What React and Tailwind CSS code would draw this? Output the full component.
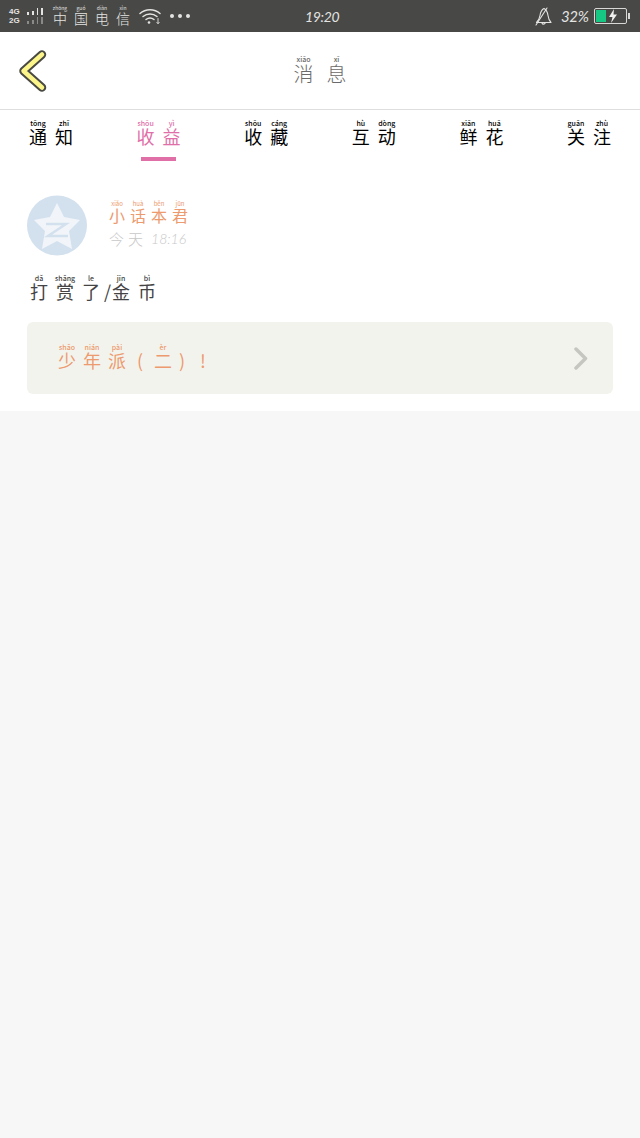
import React from 'react';

const cjk = { fontFamily: '"Noto Sans CJK SC", "Noto Sans", sans-serif' };

// One character with its pinyin on top
function Py({ han, pin, box = 'w-[18px]', pinClass = 'text-[7px] leading-[8px] font-medium', hanClass = 'text-[18px] leading-[19px]' }) {
  return (
    <span className={`inline-flex flex-col items-center shrink-0 ${box}`}>
      <span className={`${pinClass} whitespace-nowrap`}>{pin}</span>
      <span className={hanClass}>{han}</span>
    </span>
  );
}

const tabs = [
  { name: [['通', 'tōng'], ['知', 'zhī']] },
  { name: [['收', 'shōu'], ['益', 'yì']], active: true },
  { name: [['收', 'shōu'], ['藏', 'cáng']] },
  { name: [['互', 'hù'], ['动', 'dòng']] },
  { name: [['鲜', 'xiān'], ['花', 'huā']] },
  { name: [['关', 'guān'], ['注', 'zhù']] },
];

function StatusBar() {
  return (
    <div className="h-8 bg-[#484846] flex items-center pl-[9px] text-[#e4e4e2]">
      <div className="w-[18px] shrink-0 text-[8px] leading-[9px] font-semibold" style={{ fontFamily: '"Liberation Sans", sans-serif' }}>
        <div>4G</div>
        <div>2G</div>
      </div>
      <div className="w-[16px] shrink-0 flex flex-col gap-[2px]">
        <div className="flex items-end gap-[3px] h-[7px]">
          <span className="w-[2px] h-[3px] bg-[#e4e4e2]" />
          <span className="w-[2px] h-[4px] bg-[#e4e4e2]" />
          <span className="w-[2px] h-[7px] bg-[#e4e4e2]" />
          <span className="w-[2px] h-[7px] bg-[#e4e4e2]" />
        </div>
        <div className="flex items-end gap-[3px] h-[7px]">
          <span className="w-[2px] h-[3px] bg-[#8a8a88]" />
          <span className="w-[2px] h-[4px] bg-[#8a8a88]" />
          <span className="w-[2px] h-[7px] bg-[#8a8a88]" />
          <span className="w-[2px] h-[7px] bg-[#8a8a88]" />
        </div>
      </div>
      <div className="ml-[10px] flex gap-[7px] shrink-0" style={cjk}>
        {[['中', 'zhōng'], ['国', 'guó'], ['电', 'diàn'], ['信', 'xìn']].map(([han, pin]) => (
          <Py key={han} han={han} pin={pin} box="w-[14px]" pinClass="text-[5px] leading-[5px]" hanClass="text-[14px] leading-[17px] font-light" />
        ))}
      </div>
      <svg className="ml-[9px] shrink-0" width="22" height="18" viewBox="0 0 22 18" fill="none" stroke="#e4e4e2" strokeWidth="1.500" strokeLinecap="round">
        <path d="M1 6.500C6.500 1.500 15.500 1.500 21 6.500" />
        <path d="M4 9.500C8 6 14 6 18 9.500" />
        <path d="M7 12.500C9.500 10.500 12.500 10.500 15 12.500" />
        <circle cx="10" cy="15.500" r="1.300" fill="#e4e4e2" stroke="none" />
        <path d="M19 11.500v5M17.800 15.400l1.200 1.200 1.200-1.200" strokeWidth="0.900" />
      </svg>
      <div className="ml-[9px] flex gap-[4px] shrink-0">
        <span className="w-[4px] h-[4px] rounded-full bg-[#e4e4e2]" />
        <span className="w-[4px] h-[4px] rounded-full bg-[#e4e4e2]" />
        <span className="w-[4px] h-[4px] rounded-full bg-[#e4e4e2]" />
      </div>
      <span className="ml-[115px] w-[32px] shrink-0 text-[14px] tracking-tight italic" style={{ fontFamily: 'Lato, sans-serif' }}>19:20</span>
      <svg className="ml-[198px] shrink-0" width="18" height="20" viewBox="0 0 18 20" fill="none" stroke="#e4e4e2" strokeWidth="1.100" strokeLinecap="round" strokeLinejoin="round">
        <path d="M1.500 16.500c2-2 3-4 3.500-7 .5-3.500 2-6 4-7 2 1 3.500 3.500 4 7 .4 3 1 5 3 7z" />
        <path d="M7 17c.4 1.500 2.600 1.500 3.200 0" />
        <path d="M1 19L12 2" />
      </svg>
      <span className="ml-[8px] w-[24px] shrink-0 text-[15px] tracking-tight italic whitespace-nowrap" style={{ fontFamily: 'Lato, sans-serif' }}>32%</span>
      <div className="ml-[9px] flex items-center shrink-0">
        <div className="w-[33px] h-[16px] rounded-[2px] border border-[#d8d8d6] p-[1px] flex items-center">
          <div className="w-[10px] h-full bg-[#16c784]" />
          <svg className="ml-[2px]" width="10" height="14" viewBox="0 0 10 14">
            <path d="M6 0L1 8h3.500L3 14l6-8.500H5.500z" fill="#f0f0ee" />
          </svg>
        </div>
        <span className="w-[2px] h-[6px] ml-[1px] bg-[#d8d8d6]" />
      </div>
    </div>
  );
}

export default function App() {
  return (
    <div className="min-h-[1138px] bg-[#f7f7f7]" style={cjk}>
      <StatusBar />

      {/* Header */}
      <div className="h-[78px] bg-white border-b border-[#dedede] flex items-center relative">
        <svg className="ml-[17px]" width="32" height="46" viewBox="0 0 32 46" fill="none" strokeLinecap="round" strokeLinejoin="round">
          <path d="M25 6.500L6.500 23 25 39.500" stroke="#4a4a44" strokeWidth="8.500" />
          <path d="M25 6.500L6.500 23 25 39.500" stroke="#fbf58a" strokeWidth="4.500" />
        </svg>
        <div className="absolute left-[293px] top-[23px] flex gap-[13px] text-[#6a6a6a]">
          <Py han="消" pin="xiāo" box="w-[21px]" hanClass="text-[20px] leading-[22px] font-light" />
          <Py han="息" pin="xī" box="w-[19px]" hanClass="text-[20px] leading-[22px] font-light" />
        </div>
      </div>

      {/* Tabs and message */}
      <div className="bg-white h-[301px]">
        <div className="h-[51px] px-[29px] flex justify-between">
          {tabs.map((tab, i) => (
            <div key={i} className={`flex flex-col items-center pt-[9px] ${tab.active ? 'text-[#e06fa8]' : 'text-black'}`}>
              <div className="flex gap-[8px] h-[27px]">
                {tab.name.map(([han, pin]) => (
                  <Py key={han} han={han} pin={pin} />
                ))}
              </div>
              {tab.active && <div className="mt-[11px] w-[35px] h-[4px] bg-[#e06fa8]" />}
            </div>
          ))}
        </div>

        <div className="px-[27px] pt-[34px]">
          <div className="flex h-[61px]">
            <svg className="shrink-0" width="60" height="61" viewBox="0 0 60 61">
              <circle cx="30" cy="30.500" r="30" fill="#d3e1ee" />
              <path d="M30 8L37 22L53 25L42 36L45 54L30 46L15 54L18 36L7 25L23 22z" fill="#f1f5f9" />
              <path d="M19 29h20L21 41h20" fill="none" stroke="#d3e1ee" strokeWidth="2.500" />
            </svg>
            <div className="ml-[22px] pt-[6px]">
              <div className="flex gap-[5px] text-[#ec9a6e]">
                {[['小', 'xiǎo'], ['话', 'huà'], ['本', 'běn'], ['君', 'jūn']].map(([han, pin]) => (
                  <Py key={han} han={han} pin={pin} box="w-[16px]" pinClass="text-[6px] leading-[6px]" hanClass="text-[16px] leading-[17px]" />
                ))}
              </div>
              <div className="mt-[5px] flex items-center gap-[4px] text-[#c8c8c8]">
                <span className="text-[15px] leading-[20px] tracking-[4px] font-light">今天</span>
                <span className="text-[14px] leading-[20px] italic font-light" style={{ fontFamily: 'Lato, sans-serif' }}>18:16</span>
              </div>
            </div>
          </div>

          <div className="mt-[18px] ml-[3px] flex items-end h-[27px] text-[#444444]">
            <Py han="打" pin="dǎ" box="w-[18px] mr-[8px]" />
            <Py han="赏" pin="shǎng" box="w-[18px] mr-[8px]" />
            <Py han="了" pin="le" box="w-[18px] mr-[4px]" />
            <span className="text-[18px] leading-[20px] mr-[1px]">/</span>
            <Py han="金" pin="jīn" box="w-[18px] mr-[8px]" />
            <Py han="币" pin="bì" />
          </div>

          <div className="mt-[21px] h-[72px] rounded-[6px] bg-[#f3f3ed] pl-[31px] pr-[24px] flex items-center justify-between text-[#ec9a6e]">
            <div className="flex items-end gap-[7px] -mt-[4px]">
              <Py han="少" pin="shǎo" />
              <Py han="年" pin="nián" />
              <Py han="派" pin="pài" />
              <span className="text-[18px] leading-[19px] w-[14px] text-center">(</span>
              <Py han="二" pin="èr" />
              <span className="text-[18px] leading-[19px] w-[14px] -ml-[4px] text-center">)</span>
              <span className="text-[18px] leading-[19px] ml-[4px]">!</span>
            </div>
            <svg width="16" height="24" viewBox="0 0 16 24" fill="none" stroke="#c6c6c1" strokeWidth="3.500" strokeLinecap="round" strokeLinejoin="round">
              <path d="M3 3l9.500 9.500L3 22" />
            </svg>
          </div>
        </div>
      </div>
    </div>
  );
}
